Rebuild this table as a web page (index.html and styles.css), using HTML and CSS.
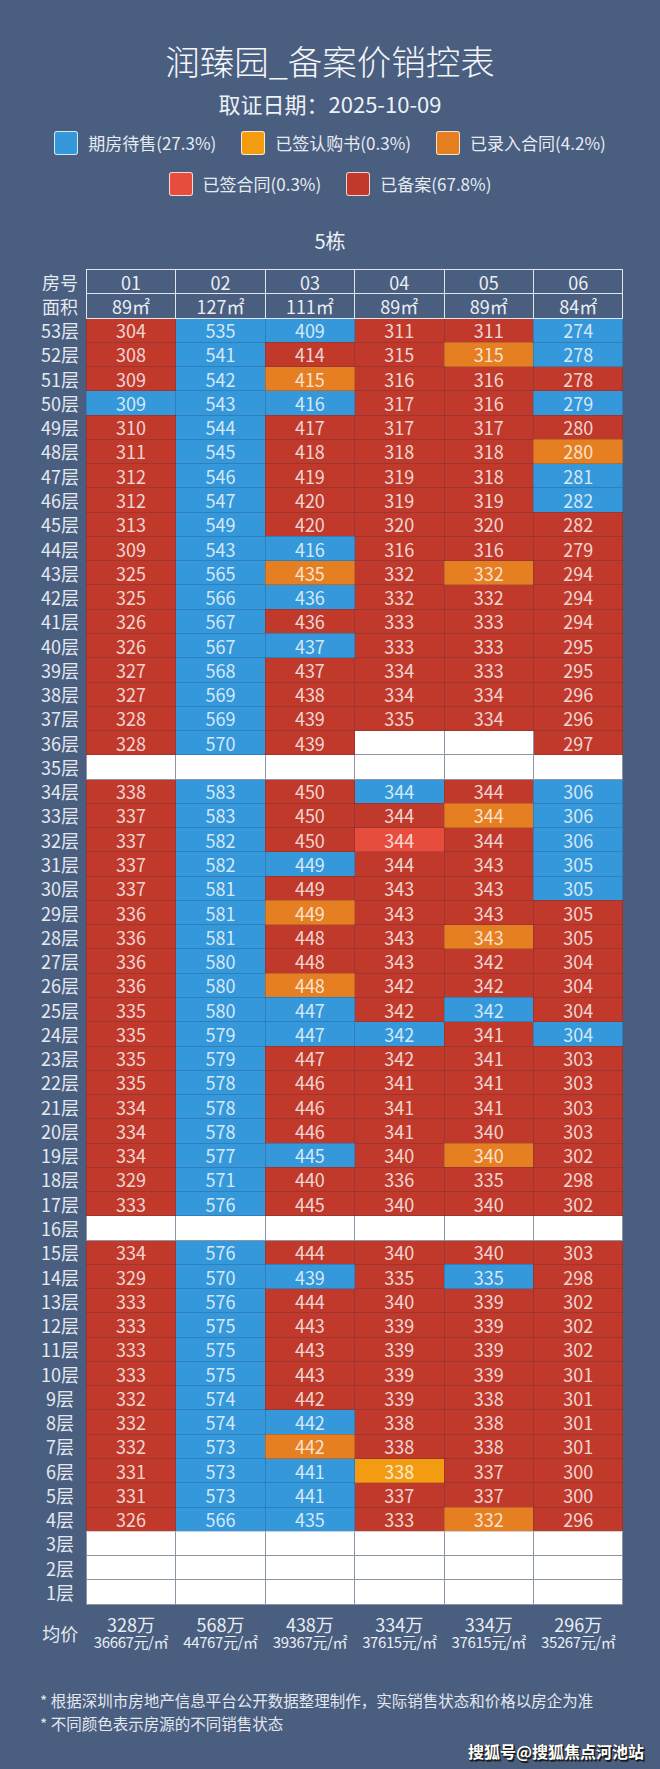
FILE: index.html
```html
<!DOCTYPE html>
<html lang="zh-CN">
<head>
<meta charset="utf-8">
<title>润臻园_备案价销控表</title>
<link rel="stylesheet" href="styles.css">
</head>
<body>
<div class="page">
  <h1 class="title">润臻园_备案价销控表</h1>
  <div class="date">取证日期：2025-10-09</div>
  <div class="legend">
    <div class="legend-row">
      <div class="item"><span class="sw b"></span><span>期房待售(27.3%)</span></div>
      <div class="item"><span class="sw y"></span><span>已签认购书(0.3%)</span></div>
      <div class="item"><span class="sw o"></span><span>已录入合同(4.2%)</span></div>
    </div>
    <div class="legend-row">
      <div class="item"><span class="sw l"></span><span>已签合同(0.3%)</span></div>
      <div class="item"><span class="sw r"></span><span>已备案(67.8%)</span></div>
    </div>
  </div>
  <div class="building">5栋</div>

  <table class="grid">
    <colgroup><col class="c-label"><col><col><col><col><col><col></colgroup>
    <thead>
      <tr><th class="f">房号</th><th class="h">01</th><th class="h">02</th><th class="h">03</th><th class="h">04</th><th class="h">05</th><th class="h">06</th></tr>
      <tr><th class="f">面积</th><th class="h">89㎡</th><th class="h">127㎡</th><th class="h">111㎡</th><th class="h">89㎡</th><th class="h">89㎡</th><th class="h">84㎡</th></tr>
    </thead>
    <tbody>
      <tr><th class="f">53层</th><td class="r">304</td><td class="b">535</td><td class="b">409</td><td class="r">311</td><td class="r">311</td><td class="b">274</td></tr>
      <tr><th class="f">52层</th><td class="r">308</td><td class="b">541</td><td class="r">414</td><td class="r">315</td><td class="o">315</td><td class="b">278</td></tr>
      <tr><th class="f">51层</th><td class="r">309</td><td class="b">542</td><td class="o">415</td><td class="r">316</td><td class="r">316</td><td class="r">278</td></tr>
      <tr><th class="f">50层</th><td class="b">309</td><td class="b">543</td><td class="b">416</td><td class="r">317</td><td class="r">316</td><td class="b">279</td></tr>
      <tr><th class="f">49层</th><td class="r">310</td><td class="b">544</td><td class="r">417</td><td class="r">317</td><td class="r">317</td><td class="r">280</td></tr>
      <tr><th class="f">48层</th><td class="r">311</td><td class="b">545</td><td class="r">418</td><td class="r">318</td><td class="r">318</td><td class="o">280</td></tr>
      <tr><th class="f">47层</th><td class="r">312</td><td class="b">546</td><td class="r">419</td><td class="r">319</td><td class="r">318</td><td class="b">281</td></tr>
      <tr><th class="f">46层</th><td class="r">312</td><td class="b">547</td><td class="r">420</td><td class="r">319</td><td class="r">319</td><td class="b">282</td></tr>
      <tr><th class="f">45层</th><td class="r">313</td><td class="b">549</td><td class="r">420</td><td class="r">320</td><td class="r">320</td><td class="r">282</td></tr>
      <tr><th class="f">44层</th><td class="r">309</td><td class="b">543</td><td class="b">416</td><td class="r">316</td><td class="r">316</td><td class="r">279</td></tr>
      <tr><th class="f">43层</th><td class="r">325</td><td class="b">565</td><td class="o">435</td><td class="r">332</td><td class="o">332</td><td class="r">294</td></tr>
      <tr><th class="f">42层</th><td class="r">325</td><td class="b">566</td><td class="b">436</td><td class="r">332</td><td class="r">332</td><td class="r">294</td></tr>
      <tr><th class="f">41层</th><td class="r">326</td><td class="b">567</td><td class="r">436</td><td class="r">333</td><td class="r">333</td><td class="r">294</td></tr>
      <tr><th class="f">40层</th><td class="r">326</td><td class="b">567</td><td class="b">437</td><td class="r">333</td><td class="r">333</td><td class="r">295</td></tr>
      <tr><th class="f">39层</th><td class="r">327</td><td class="b">568</td><td class="r">437</td><td class="r">334</td><td class="r">333</td><td class="r">295</td></tr>
      <tr><th class="f">38层</th><td class="r">327</td><td class="b">569</td><td class="r">438</td><td class="r">334</td><td class="r">334</td><td class="r">296</td></tr>
      <tr><th class="f">37层</th><td class="r">328</td><td class="b">569</td><td class="r">439</td><td class="r">335</td><td class="r">334</td><td class="r">296</td></tr>
      <tr><th class="f">36层</th><td class="r">328</td><td class="b">570</td><td class="r">439</td><td class="w"></td><td class="w"></td><td class="r">297</td></tr>
      <tr><th class="f">35层</th><td class="w"></td><td class="w"></td><td class="w"></td><td class="w"></td><td class="w"></td><td class="w"></td></tr>
      <tr><th class="f">34层</th><td class="r">338</td><td class="b">583</td><td class="r">450</td><td class="b">344</td><td class="r">344</td><td class="b">306</td></tr>
      <tr><th class="f">33层</th><td class="r">337</td><td class="b">583</td><td class="r">450</td><td class="r">344</td><td class="o">344</td><td class="b">306</td></tr>
      <tr><th class="f">32层</th><td class="r">337</td><td class="b">582</td><td class="r">450</td><td class="l">344</td><td class="r">344</td><td class="b">306</td></tr>
      <tr><th class="f">31层</th><td class="r">337</td><td class="b">582</td><td class="b">449</td><td class="r">344</td><td class="r">343</td><td class="b">305</td></tr>
      <tr><th class="f">30层</th><td class="r">337</td><td class="b">581</td><td class="r">449</td><td class="r">343</td><td class="r">343</td><td class="b">305</td></tr>
      <tr><th class="f">29层</th><td class="r">336</td><td class="b">581</td><td class="o">449</td><td class="r">343</td><td class="r">343</td><td class="r">305</td></tr>
      <tr><th class="f">28层</th><td class="r">336</td><td class="b">581</td><td class="r">448</td><td class="r">343</td><td class="o">343</td><td class="r">305</td></tr>
      <tr><th class="f">27层</th><td class="r">336</td><td class="b">580</td><td class="r">448</td><td class="r">343</td><td class="r">342</td><td class="r">304</td></tr>
      <tr><th class="f">26层</th><td class="r">336</td><td class="b">580</td><td class="o">448</td><td class="r">342</td><td class="r">342</td><td class="r">304</td></tr>
      <tr><th class="f">25层</th><td class="r">335</td><td class="b">580</td><td class="b">447</td><td class="r">342</td><td class="b">342</td><td class="r">304</td></tr>
      <tr><th class="f">24层</th><td class="r">335</td><td class="b">579</td><td class="b">447</td><td class="b">342</td><td class="r">341</td><td class="b">304</td></tr>
      <tr><th class="f">23层</th><td class="r">335</td><td class="b">579</td><td class="r">447</td><td class="r">342</td><td class="r">341</td><td class="r">303</td></tr>
      <tr><th class="f">22层</th><td class="r">335</td><td class="b">578</td><td class="r">446</td><td class="r">341</td><td class="r">341</td><td class="r">303</td></tr>
      <tr><th class="f">21层</th><td class="r">334</td><td class="b">578</td><td class="r">446</td><td class="r">341</td><td class="r">341</td><td class="r">303</td></tr>
      <tr><th class="f">20层</th><td class="r">334</td><td class="b">578</td><td class="r">446</td><td class="r">341</td><td class="r">340</td><td class="r">303</td></tr>
      <tr><th class="f">19层</th><td class="r">334</td><td class="b">577</td><td class="b">445</td><td class="r">340</td><td class="o">340</td><td class="r">302</td></tr>
      <tr><th class="f">18层</th><td class="r">329</td><td class="b">571</td><td class="r">440</td><td class="r">336</td><td class="r">335</td><td class="r">298</td></tr>
      <tr><th class="f">17层</th><td class="r">333</td><td class="b">576</td><td class="r">445</td><td class="r">340</td><td class="r">340</td><td class="r">302</td></tr>
      <tr><th class="f">16层</th><td class="w"></td><td class="w"></td><td class="w"></td><td class="w"></td><td class="w"></td><td class="w"></td></tr>
      <tr><th class="f">15层</th><td class="r">334</td><td class="b">576</td><td class="r">444</td><td class="r">340</td><td class="r">340</td><td class="r">303</td></tr>
      <tr><th class="f">14层</th><td class="r">329</td><td class="b">570</td><td class="b">439</td><td class="r">335</td><td class="b">335</td><td class="r">298</td></tr>
      <tr><th class="f">13层</th><td class="r">333</td><td class="b">576</td><td class="r">444</td><td class="r">340</td><td class="r">339</td><td class="r">302</td></tr>
      <tr><th class="f">12层</th><td class="r">333</td><td class="b">575</td><td class="r">443</td><td class="r">339</td><td class="r">339</td><td class="r">302</td></tr>
      <tr><th class="f">11层</th><td class="r">333</td><td class="b">575</td><td class="r">443</td><td class="r">339</td><td class="r">339</td><td class="r">302</td></tr>
      <tr><th class="f">10层</th><td class="r">333</td><td class="b">575</td><td class="r">443</td><td class="r">339</td><td class="r">339</td><td class="r">301</td></tr>
      <tr><th class="f">9层</th><td class="r">332</td><td class="b">574</td><td class="r">442</td><td class="r">339</td><td class="r">338</td><td class="r">301</td></tr>
      <tr><th class="f">8层</th><td class="r">332</td><td class="b">574</td><td class="b">442</td><td class="r">338</td><td class="r">338</td><td class="r">301</td></tr>
      <tr><th class="f">7层</th><td class="r">332</td><td class="b">573</td><td class="o">442</td><td class="r">338</td><td class="r">338</td><td class="r">301</td></tr>
      <tr><th class="f">6层</th><td class="r">331</td><td class="b">573</td><td class="b">441</td><td class="y">338</td><td class="r">337</td><td class="r">300</td></tr>
      <tr><th class="f">5层</th><td class="r">331</td><td class="b">573</td><td class="b">441</td><td class="r">337</td><td class="r">337</td><td class="r">300</td></tr>
      <tr><th class="f">4层</th><td class="r">326</td><td class="b">566</td><td class="b">435</td><td class="r">333</td><td class="o">332</td><td class="r">296</td></tr>
      <tr><th class="f">3层</th><td class="w"></td><td class="w"></td><td class="w"></td><td class="w"></td><td class="w"></td><td class="w"></td></tr>
      <tr><th class="f">2层</th><td class="w"></td><td class="w"></td><td class="w"></td><td class="w"></td><td class="w"></td><td class="w"></td></tr>
      <tr><th class="f">1层</th><td class="w"></td><td class="w"></td><td class="w"></td><td class="w"></td><td class="w"></td><td class="w"></td></tr>
    </tbody>
  </table>

  <div class="avg">
    <div class="avg-label">均价</div>
    <div class="avg-cell"><div class="total">328万</div><div class="unit">36667元/㎡</div></div>
    <div class="avg-cell"><div class="total">568万</div><div class="unit">44767元/㎡</div></div>
    <div class="avg-cell"><div class="total">438万</div><div class="unit">39367元/㎡</div></div>
    <div class="avg-cell"><div class="total">334万</div><div class="unit">37615元/㎡</div></div>
    <div class="avg-cell"><div class="total">334万</div><div class="unit">37615元/㎡</div></div>
    <div class="avg-cell"><div class="total">296万</div><div class="unit">35267元/㎡</div></div>
  </div>

  <div class="notes">
    <p>* 根据深圳市房地产信息平台公开数据整理制作，实际销售状态和价格以房企为准</p>
    <p>* 不同颜色表示房源的不同销售状态</p>
  </div>
  <div class="watermark">搜狐号@搜狐焦点河池站</div>
</div>
</body>
</html>
```

FILE: styles.css
```css
* { box-sizing: border-box; }
html, body { margin: 0; padding: 0; }
body {
  background: #4a5e80;
  font-family: "Noto Sans CJK SC", "Noto Sans", sans-serif;
  color: #e8edf3;
}
.page {
  width: 660px;
  height: 1769px;
  overflow: hidden;
  background: #4a5e80;
}
.title {
  margin: 40px 0 0;
  font-size: 34.5px;
  line-height: 40px;
  font-weight: 300;
  text-align: center;
  color: #f4f6f9;
}
.date {
  margin-top: 10px;
  font-size: 22px;
  line-height: 26px;
  text-align: center;
  color: #eef1f5;
}
.legend { margin-top: 15px; }
.legend-row {
  display: flex;
  justify-content: center;
  gap: 25px;
  height: 24px;
}
.legend-row + .legend-row { margin-top: 17px; }
.item {
  display: flex;
  align-items: center;
  gap: 10px;
  font-size: 17px;
  line-height: 24px;
  color: #e6ebf2;
}
.sw {
  width: 24px;
  height: 24px;
  border: 1.5px solid rgba(255,255,255,0.78);
  border-radius: 3px;
}
.sw.b, td.b { background: #3498db; }
.sw.y, td.y { background: #f39c12; }
.sw.o, td.o { background: #e67e22; }
.sw.l, td.l { background: #e74c3c; }
.sw.r, td.r { background: #c0392b; }
.building {
  margin-top: 33px;
  font-size: 20px;
  line-height: 24px;
  text-align: center;
  color: #eef1f5;
}
.grid {
  margin-top: 16px;
  margin-left: 34px;
  border-collapse: collapse;
  table-layout: fixed;
  width: 589px;
}
.grid col { width: 89.45px; }
.grid col.c-label { width: 52.3px; }
.grid tr { height: 24.27px; }
.grid th, .grid td {
  padding: 0;
  text-align: center;
  font-weight: 400;
  line-height: 20px;
  white-space: nowrap;
}
.grid th.f {
  font-size: 18px;
  color: #e4e9f0;
  border: none;
}
.grid th.h {
  font-size: 18px;
  color: #e9eef4;
  border: 1px solid #dfe5ec;
}
.grid td {
  font-size: 18px;
  color: rgba(255,255,255,0.8);
  border: 1px solid rgba(30,40,70,0.22);
}
.grid td.w {
  background: #ffffff;
  border: 1px solid #8c95a5;
}
.avg {
  display: grid;
  grid-template-columns: 52.3px repeat(6, 89.45px);
  margin-left: 34px;
  margin-top: 10px;
  align-items: center;
}
.avg-label {
  font-size: 18px;
  line-height: 22px;
  text-align: center;
  color: #e4e9f0;
}
.avg-cell { text-align: center; color: #e8edf3; }
.total { font-size: 18px; line-height: 18px; }
.unit { font-size: 15px; line-height: 18px; letter-spacing: -0.4px; }
.notes {
  margin-top: 38px;
  padding-left: 40px;
  font-size: 15.5px;
  line-height: 23px;
  color: #e2e7ee;
}
.notes p { margin: 0; }
.watermark {
  margin-top: 6px;
  padding-right: 16px;
  text-align: right;
  font-size: 16px;
  line-height: 20px;
  font-weight: 700;
  color: #ffffff;
  text-shadow: 1.5px 1.5px 0 #1c1c1c, 1px 0 0 #2a2a2a, 0 1px 0 #2a2a2a;
}
```
